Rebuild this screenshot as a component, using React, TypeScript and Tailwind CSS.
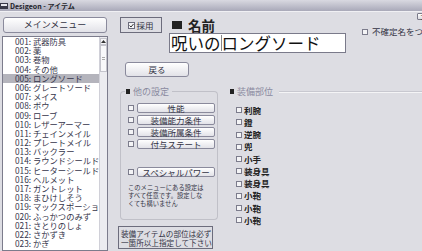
import React from "react";

const listItems = [
  "001: 武器防具",
  "002: 薬",
  "003: 巻物",
  "004: その他",
  "005: ロングソード",
  "006: グレートソード",
  "007: メイス",
  "008: ボウ",
  "009: ローブ",
  "010: レザーアーマー",
  "011: チェインメイル",
  "012: プレートメイル",
  "013: バックラー",
  "014: ラウンドシールド",
  "015: ヒーターシールド",
  "016: ヘルメット",
  "017: ガントレット",
  "018: まひけしそう",
  "019: マックスポーション",
  "020: ふっかつのみず",
  "021: さとりのしょ",
  "022: さかずき",
  "023: かぎ",
];

const parts = ["利腕", "鐙", "逆腕", "兜", "小手", "装身具", "装身具", "小鞄", "小鞄", "小鞄"];
const settings = ["性能", "装備能力条件", "装備所属条件", "付与ステート"];

function Box({ className = "" }: { className?: string }) {
  return <span className={"inline-block w-[6px] h-[6px] border border-[#7c7c8c] bg-[#f4f4f6] shrink-0 " + className} />;
}

function Btn({ children, className = "" }: { children: React.ReactNode; className?: string }) {
  return (
    <div
      className={
        "flex items-center justify-center border border-[#8a8a9c] rounded-[2px] bg-gradient-to-b from-[#ffffff] to-[#e2e2e8] text-[#333344] whitespace-nowrap " +
        className
      }
    >
      {children}
    </div>
  );
}

export default function App() {
  return (
    <div
      className="w-[422px] h-[251px] overflow-hidden bg-[#dddde3] flex flex-col text-[#222]"
      style={{ fontFamily: '"Noto Sans CJK JP", "Noto Sans", sans-serif' }}
    >
      {/* Title bar */}
      <div className="h-[12px] shrink-0 bg-gradient-to-b from-[#d9d9e1] to-[#a9a9b9] border-b border-[#f0f0f4] flex items-center gap-[2px]">
        <svg width="8" height="8" viewBox="0 0 8 8" className="shrink-0">
          <rect x="0" y="1" width="8" height="6" fill="#3a3a48" />
          <rect x="1" y="2" width="6" height="2" fill="#e8e8ee" />
        </svg>
        <span className="text-[7px] leading-[8px] font-bold text-[#1e1e2a]">Desigeon - アイテム</span>
      </div>

      <div className="flex flex-1 min-h-0">
        {/* Left column */}
        <div className="w-[110px] shrink-0 flex flex-col pl-[2px] pt-[5px]">
          <Btn className="ml-[1px] w-[104px] h-[16px] text-[9px] rounded-[3px]">メインメニュー</Btn>
          <div className="mt-[3px] w-[106px] flex-1 min-h-0 border border-[#7c7c8c] bg-white flex">
            <div className="flex-1 min-w-0 flex flex-col">
              {listItems.map((t, i) => (
                <div
                  key={t}
                  className={
                    "h-[9.2px] shrink-0 pl-[12px] text-[8.3px] leading-[9.2px] whitespace-nowrap overflow-hidden text-[#35354a] " +
                    (i === 4 ? "bg-[#b4b4bc]" : "")
                  }
                >
                  {t}
                </div>
              ))}
            </div>
            <div className="w-[8px] shrink-0 bg-[#ececf0] border-l border-[#d0d0d8] flex flex-col">
              <div className="h-[7px] mt-[1px] bg-[#f6f6f8] border border-[#c4c4cc] flex items-center justify-center">
                <svg width="5" height="3" viewBox="0 0 5 3">
                  <path d="M0 3 L2.5 0 L5 3 Z" fill="#333" />
                </svg>
              </div>
              <div className="h-[27px] bg-[#f8f8fa] border border-[#c4c4cc] flex items-center justify-center">
                <div className="w-[3px] h-[3px] border-y border-[#aaa]" />
              </div>
            </div>
          </div>
        </div>

        {/* Right area */}
        <div className="flex-1 flex flex-col pl-[10px]">
          {/* Top row */}
          <div className="flex items-start">
            <div className="mt-[5px] w-[42px] h-[16px] border border-[#6c6c7c] flex items-center justify-center gap-[1px] text-[8.5px] text-[#333344]">
              <svg width="7" height="7" viewBox="0 0 7 7" className="shrink-0">
                <rect x="0.5" y="0.5" width="6" height="6" fill="#f4f4f6" stroke="#6c6c7c" />
                <path d="M1.5 3.5 L3 5 L5.5 2" fill="none" stroke="#333" strokeWidth="1" />
              </svg>
              <span>採用</span>
            </div>
            <div className="ml-[7px] mt-[5px] flex flex-col">
              <div className="h-[16px] flex items-center pl-[3px] gap-[6px]">
                <span className="w-[10px] h-[8px] bg-[#222]" />
                <span className="text-[13.5px] font-bold leading-[14px] text-[#222]">名前</span>
              </div>
              <div className="w-[177px] h-[20px] border border-[#7a7a8a] bg-white flex items-center pl-[1px] text-[16.5px] leading-[18px] text-[#111] whitespace-nowrap overflow-hidden">
                <span>呪いの</span>
                <span className="w-[1px] h-[16px] bg-[#888]" />
                <span>ロングソード</span>
              </div>
            </div>
            <div className="ml-[16px] flex-1 flex flex-col mt-[1px] min-w-0">
              <div className="self-end mr-[2px] w-[21px] h-[7px] border border-[#7a7a8a] rounded-[1px] bg-gradient-to-b from-white to-[#dcdce2] flex items-center justify-center text-[5px] leading-[5px] text-[#333]">
                コピー
              </div>
              <div className="mt-[7px] flex items-center gap-[4px] whitespace-nowrap overflow-hidden text-[8.5px] leading-[9px] text-[#333344]">
                <Box />
                <span>不確定名をつける</span>
              </div>
            </div>
          </div>

          {/* Back button */}
          <Btn className="ml-[5px] mt-[9px] w-[64px] h-[15px] text-[8.5px] rounded-[3px]">戻る</Btn>

          {/* Lower section */}
          <div className="mt-[10px] flex items-start">
            <div className="flex flex-col w-[98px] shrink-0">
              {/* group box */}
              <div className="flex flex-col h-[133px]">
                <div className="h-[9px] flex">
                  <div className="w-[5px] h-[5px] self-end border-l border-t border-[#c0c0c8] rounded-tl-[4px]" />
                  <div className="flex items-center gap-[3px] px-[1px] text-[9px] leading-[9px] text-[#8a8aa0]">
                    <span className="w-[4px] h-[5px] bg-[#222]" />
                    <span>他の設定</span>
                  </div>
                  <div className="flex-1 h-[5px] self-end ml-[2px] border-r border-t border-[#c0c0c8] rounded-tr-[4px]" />
                </div>
                <div className="flex-1 border-x border-b border-[#c0c0c8] rounded-b-[4px] flex flex-col gap-[2px] pl-[7px] pt-[7px]">
                  {settings.map((s) => (
                    <div key={s} className="flex items-center gap-[3px]">
                      <Box />
                      <Btn className="w-[78px] h-[10px] text-[8.5px] leading-[9px]">{s}</Btn>
                    </div>
                  ))}
                  <div className="flex items-center gap-[3px] mt-[16px]">
                    <Box />
                    <Btn className="w-[78px] h-[10px] text-[8.5px] leading-[9px]">スペシャルパワー</Btn>
                  </div>
                  <div className="mt-[5px] text-[6.3px] leading-[8px] text-[#333344]">
                    このメニューにある設定は
                    <br />
                    すべて任意です。設定しな
                    <br />
                    くても構いません
                  </div>
                </div>
              </div>
              <div className="mt-[6px] -ml-[2px] w-[95px] h-[23px] border border-[#6c6c7c] flex flex-col justify-center pl-[2px] text-[7.6px] leading-[9px] text-[#333344] whitespace-nowrap">
                <span>装備アイテムの部位は必ず</span>
                <span>一箇所以上指定して下さい</span>
              </div>
            </div>

            <div className="ml-[12px] flex-1 flex flex-col">
              <div className="h-[9px] flex items-center gap-[3px]">
                <span className="w-[4px] h-[5px] bg-[#222]" />
                <span className="text-[9px] leading-[9px] text-[#8a8aa0]">装備部位</span>
                <span className="flex-1 ml-[3px] h-[2px] border-t border-[#c8c8d0] border-b border-b-[#f4f4f6]" />
              </div>
              <div className="flex flex-col pl-[6px] pt-[8px]">
                {parts.map((p, i) => (
                  <div key={i} className="h-[12.25px] flex items-center gap-[2px]">
                    <Box />
                    <span className="text-[8.5px] leading-[9px] font-bold text-[#222]">{p}</span>
                  </div>
                ))}
              </div>
            </div>
          </div>
        </div>
      </div>
    </div>
  );
}
